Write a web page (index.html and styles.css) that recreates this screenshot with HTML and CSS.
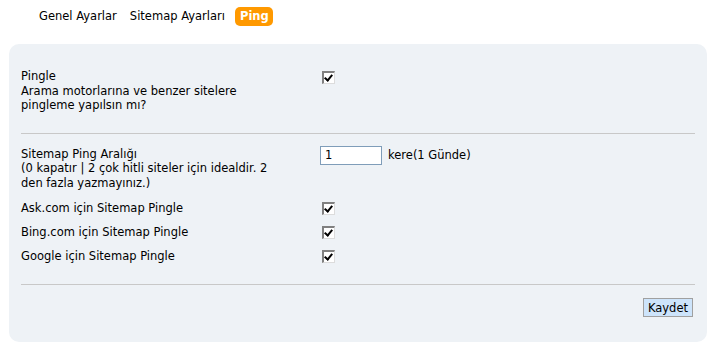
FILE: index.html
```html
<!DOCTYPE html>
<html lang="tr">
<head>
  <meta charset="UTF-8">
  <title>Ping Ayarları</title>
  <link rel="stylesheet" href="styles.css">
</head>
<body>

  <!-- Tabs -->
  <div class="tabs">
    <a href="#" class="tab">Genel Ayarlar</a>
    <a href="#" class="tab">Sitemap Ayarları</a>
    <a href="#" class="tab active">Ping</a>
  </div>

  <!-- Settings panel -->
  <form class="panel">
    <div class="section first">
      <div class="row">
        <div class="label">Pingle<br>Arama motorlarına ve benzer sitelere pingleme yapılsın mı?</div>
        <div class="control"><span class="check top"></span></div>
      </div>
    </div>

    <hr class="sep">

    <div class="section">
      <div class="row intro">
        <div class="label">Sitemap Ping Aralığı<br>(0 kapatır | 2 çok hitli siteler için idealdir. 2 den fazla yazmayınız.)</div>
        <div class="control"><input type="text" class="num" value="1"> <span class="unit">kere(1 Günde)</span></div>
      </div>
      <div class="row line">
        <div class="label">Ask.com için Sitemap Pingle</div>
        <div class="control"><span class="check"></span></div>
      </div>
      <div class="row line">
        <div class="label">Bing.com için Sitemap Pingle</div>
        <div class="control"><span class="check"></span></div>
      </div>
      <div class="row line">
        <div class="label">Google için Sitemap Pingle</div>
        <div class="control"><span class="check"></span></div>
      </div>
    </div>

    <hr class="sep last">

    <div class="actions">
      <button type="button" class="btn">Kaydet</button>
    </div>
  </form>

</body>
</html>
```

FILE: styles.css
```css
* {
  margin: 0;
  padding: 0;
  box-sizing: border-box;
}

body {
  font-family: "DejaVu Sans", Verdana, sans-serif;
  font-size: 11.5px;
  color: #000;
  background: #fff;
}

.tabs {
  display: flex;
  align-items: center;
  gap: 5px;
  padding: 7px 0 0 35px;
  height: 26px;
}

.tab {
  color: #000;
  text-decoration: none;
  padding: 0 4px;
  line-height: 19px;
}

.tab.active {
  margin-left: 1px;
  background: #f90;
  color: #fff;
  font-weight: bold;
  border-radius: 5px;
  padding: 0 4px 0 5px;
}

.panel {
  margin: 18px 12px 0 9px;
  background: #eef2f6;
  border-radius: 10px;
  padding: 25px 12px 25px 12px;
}

.row {
  display: grid;
  grid-template-columns: 299px 1fr;
  line-height: 14.5px;
}

.row .label {
  padding-right: 40px;
}

.row.line {
  align-items: center;
  height: 24px;
}

.row.intro {
  margin-bottom: 6px;
}

.control {
  display: flex;
  align-items: flex-start;
}

.row.line .control {
  align-items: center;
}

.sep {
  border: 0;
  border-top: 1px solid #c8c8c8;
  margin: 20px 0 13px;
}

.sep.last {
  margin: 16px 0 13px;
}

.check {
  display: inline-block;
  width: 13px;
  height: 13px;
  margin-left: 2px;
  background: #fff;
  border-style: solid;
  border-width: 2px 1px 1px 2px;
  border-color: #808080 #dcdcdc #dcdcdc #808080;
  position: relative;
}

.check.top {
  margin-top: 2px;
}

.check::after {
  content: "";
  position: absolute;
  left: 2px;
  top: 0px;
  width: 3px;
  height: 6px;
  border: solid #000;
  border-width: 0 2px 2px 0;
  transform: rotate(40deg);
}

.num {
  width: 62px;
  height: 19px;
  border: 1px solid #7f9db9;
  background: #fff;
  font-family: "DejaVu Sans", Verdana, sans-serif;
  font-size: 11.5px;
  padding: 0 0 0 4px;
  margin-top: -1px;
}

.unit {
  margin-left: 6px;
  line-height: 16px;
}

.actions {
  display: flex;
  justify-content: flex-end;
  padding-right: 2px;
}

.btn {
  font-family: "DejaVu Sans", Verdana, sans-serif;
  font-size: 11.5px;
  background: #cde4fb;
  border: 1px solid #a0a0a0;
  padding: 0 4px;
  height: 19px;
  color: #000;
}
```
